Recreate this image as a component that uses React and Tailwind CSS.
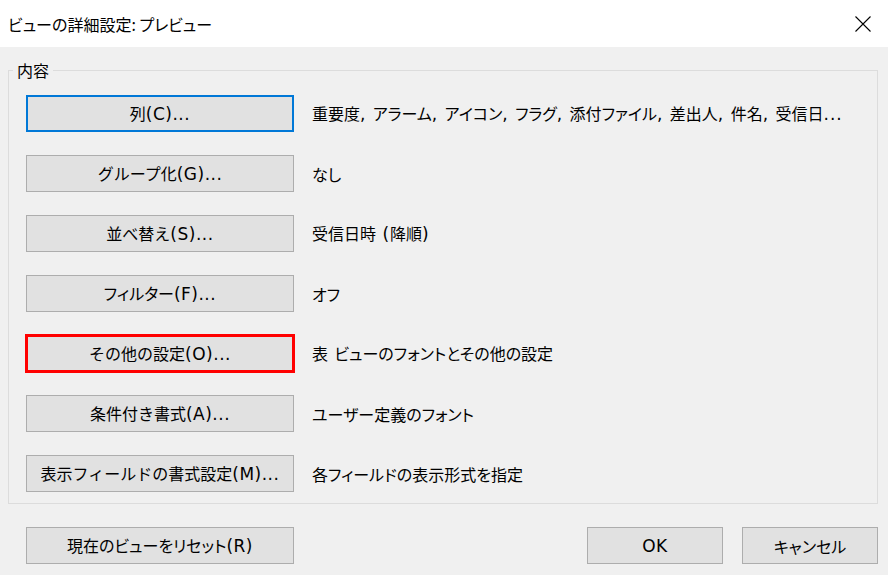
import React from "react";

const rows = [
  { label: "列(C)...", desc: "重要度, アラーム, アイコン, フラグ, 添付ファイル, 差出人, 件名, 受信日...", kind: "focus" },
  { label: "グループ化(G)...", desc: "なし" },
  { label: "並べ替え(S)...", desc: "受信日時 (降順)" },
  { label: "フィルター(F)...", desc: "オフ", palt: true },
  { label: "その他の設定(O)...", desc: "表 ビューのフォントとその他の設定", kind: "red" },
  { label: "条件付き書式(A)...", desc: "ユーザー定義のフォント" },
  { label: "表示フィールドの書式設定(M)...", desc: "各フィールドの表示形式を指定" },
];

function T({ text, wide }) {
  const parts = text.split(/([\x20-\x7E]+)/).filter((p) => p.length);
  return (
    <>
      {parts.map((p, i) =>
        /^[\x20-\x7E]+$/.test(p) ? (
          <span
            key={i}
            className={`font-['DejaVu_Sans'] text-[17px] ${wide ? "tracking-[1px]" : "tracking-[0.5px]"}`}
          >
            {p}
          </span>
        ) : (
          <span key={i}>{p}</span>
        )
      )}
    </>
  );
}

function Btn({ children, kind, palt, className = "" }) {
  let border = "border border-[#adadad]";
  if (kind === "focus") border = "border-2 border-[#0078d7]";
  if (kind === "red") border = "border-2 border-[#ff0000] outline outline-1 outline-[#ff0000]";
  return (
    <div
      className={`h-[37px] bg-[#e1e1e1] ${border} flex items-center justify-center text-[16px] text-black shrink-0 ${
        palt ? "[font-feature-settings:'palt']" : "[font-feature-settings:normal]"
      } ${className}`}
    >
      <span className="whitespace-nowrap">{children}</span>
    </div>
  );
}

export default function App() {
  return (
    <div
      className="w-[888px] h-[575px] bg-[#f0f0f0] flex flex-col text-black [font-feature-settings:'palt'] leading-none"
      style={{ fontFamily: '"Noto Sans CJK JP", "Noto Sans", sans-serif' }}
    >
      <div className="h-[47px] bg-white flex items-center justify-between pl-[8px] pr-[17px] shrink-0">
        <span className="text-[16px]">ビューの詳細設定: プレビュー</span>
        <svg width="16" height="16" viewBox="0 0 16 16" className="block">
          <path d="M0.5 0.5 L15.5 15.5 M15.5 0.5 L0.5 15.5" stroke="#000" strokeWidth="1.1" />
        </svg>
      </div>
      <div className="pl-[8px] pr-[10px] pt-[13px]">
        <fieldset className="border border-[#dcdcdc] h-[444px]">
          <legend className="ml-[4px] px-[4px] text-[16px] leading-[20px]">内容</legend>
          <div className="pl-[17px] pt-[15px] flex flex-col gap-[23px]">
            {rows.map((r) => (
              <div key={r.label} className="flex items-center gap-[18px]">
                <Btn kind={r.kind} palt={r.palt} className="w-[268px]">
                  <T text={r.label} />
                </Btn>
                <span className="text-[16px] whitespace-nowrap">
                  <T text={r.desc} wide />
                </span>
              </div>
            ))}
          </div>
        </fieldset>
        <div className="flex items-center mt-[23px] pl-[18px]">
          <Btn palt className="w-[268px]">
            <T text="現在のビューをリセット(R)" />
          </Btn>
          <div className="flex-1" />
          <Btn className="w-[136px]">
            <T text="OK" />
          </Btn>
          <Btn palt className="w-[136px] ml-[19px]">キャンセル</Btn>
        </div>
      </div>
    </div>
  );
}
